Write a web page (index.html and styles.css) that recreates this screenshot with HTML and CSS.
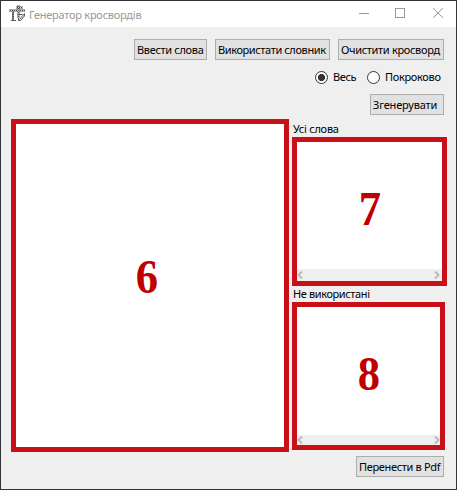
FILE: index.html
```html
<!DOCTYPE html>
<html lang="uk">
<head>
<meta charset="utf-8">
<title>Генератор кросвордів</title>
<link rel="stylesheet" href="styles.css">
</head>
<body>
<div class="window">
  <header class="titlebar">
    <svg class="logo" width="17" height="17" viewBox="0 0 17 17" fill="none" stroke="#555">
      <path stroke-width="2" d="M0 5.500h16M4 5v11M9.500 0v13M7 2.500h7"/>
      <path stroke-width="1" d="M2 15.500h5M8.500 9.500h5M15.500 8.500l-5 6M15.500 9v2l-4 4.500h-2v-3"/>
      <path stroke="#ddd" stroke-width=".8" stroke-dasharray="1 1" d="M0 5.500h16M4 6v10M9.500 0v13M7 2.500h7"/>
    </svg>
    <h1 class="title"><span class="t-title">Генератор кросвордів</span></h1>
    <svg class="controls" width="90" height="12" viewBox="0 0 90 12" fill="none" stroke="#999" shape-rendering="crispEdges">
      <path d="M5 5.5h10"/><rect x="41.5" y=".5" width="9" height="9"/><path d="M79 0l10 10M89 0l-10 10" shape-rendering="auto"/>
    </svg>
  </header>
  <div class="row actions">
    <button class="b1"><span class="t-enter">Ввести слова</span></button>
    <button class="b2"><span class="t-dict">Використати словник</span></button>
    <button class="b3"><span class="t-clear">Очистити кросворд</span></button>
  </div>
  <div class="row modes">
    <span class="radio on"></span><span class="mode-all"><span class="t-all">Весь</span></span>
    <span class="radio"></span><span class="mode-step"><span class="t-step">Покроково</span></span>
  </div>
  <div class="row generate"><button class="b4"><span class="t-gen">Згенерувати</span></button></div>
  <main class="content">
    <section class="panel grid-panel"><div class="number"><span>6</span></div></section>
    <div class="side">
      <div class="label"><span class="t-words">Усі слова</span></div>
      <section class="panel words">
        <div class="number"><span>7</span></div>
        <div class="scroll"><svg width="6" height="8" viewBox="0 0 6 8"><path d="M5 .5L1.5 4 5 7.5"/></svg><svg width="6" height="8" viewBox="0 0 6 8"><path d="M1 .5L4.500 4 1 7.500"/></svg></div>
      </section>
      <div class="label unused-label"><span class="t-unused">Не використані</span></div>
      <section class="panel unused">
        <div class="number"><span>8</span></div>
        <div class="scroll"><svg width="6" height="8" viewBox="0 0 6 8"><path d="M5 .5L1.500 4 5 7.500"/></svg><svg width="6" height="8" viewBox="0 0 6 8"><path d="M1 .5L4.500 4 1 7.500"/></svg></div>
      </section>
      <button class="b5"><span class="t-pdf">Перенести в Pdf</span></button>
    </div>
  </main>
</div>
</body>
</html>
```
FILE: styles.css
```css
* { box-sizing: border-box; }
body { margin: 0; font: 11px/15px "Noto Sans", "Open Sans", sans-serif; color: #000; }
.window { width: 457px; height: 490px; border: 1px solid #333338; background: #efefef; overflow: hidden; }
.titlebar { height: 26px; background: #fff; display: flex; align-items: center; padding: 0 12px 0 8px; }
.logo { margin-top: -1px; }
.title { flex: 1; margin: 0 0 0 3px; font-size: 11px; font-weight: 400; color: #999; white-space: nowrap; }
.row { display: flex; justify-content: flex-end; padding-right: 12px; }
.actions { padding-top: 12px; gap: 8px; }
button { height: 21px; padding: 0 0 0 2px; border: 1px solid #adadad; background: #e1e1e1; font: inherit; color: #000; text-align: left; white-space: nowrap; display: block; }
.b1 { width: 73px; }
.b2 { width: 115px; }
.b3 { width: 106px; }
.b4 { width: 74px; }
.b5 { width: 88px; margin: 6px 0 0 64px; }
.modes { height: 34px; align-items: center; white-space: nowrap; }
.modes > span:not(.radio) { padding-bottom: 1px; }
.radio { width: 13px; height: 13px; border: 1px solid #333; border-radius: 50%; background: #fff; flex: none; }
.on { background: radial-gradient(circle, #333 3.2px, #fff 3.9px); }
.mode-all { width: 34px; margin-left: 5px; }
.mode-step { width: 59px; margin-left: 5px; }
.content { display: flex; margin: 4px 0 0 10px; align-items: flex-start; }
.panel { border: 5px solid #c90f17; background: #fff; display: flex; flex-direction: column; }
.grid-panel { width: 278px; height: 333px; }
.side { margin-left: 3px; }
.label { height: 18px; padding: 2px 0 0 1px; white-space: nowrap; }
.unused-label { height: 16px; padding-top: 0; }
.words { width: 155px; height: 149px; }
.unused { width: 153px; height: 148px; }
.number { flex: 1; display: flex; align-items: center; justify-content: center; font: bold 48px/48px "Liberation Serif", serif; color: #c00000; }
.number span { transform: scaleX(.93); }
.grid-panel .number { padding: 0 6px 18px 0; }
.words .number { padding: 7px 0 0 0; }
.unused .number { padding: 6px 0 0 0; }
.scroll { height: 12px; padding: 0 2px 0 0; background: #efefef; display: flex; align-items: center; justify-content: space-between; }
.unused .scroll { height: 10px; padding-right: 0; }
.scroll svg { fill: none; stroke: #bbb; stroke-width: 2; }
.t-title { letter-spacing: -.25px; }
.t-enter, .t-clear, .t-step, .t-pdf { letter-spacing: -.33px; }
.t-dict, .t-all, .t-unused { letter-spacing: -.39px; }
.t-gen { letter-spacing: -.18px; }
.t-words { letter-spacing: -.25px; }
```
